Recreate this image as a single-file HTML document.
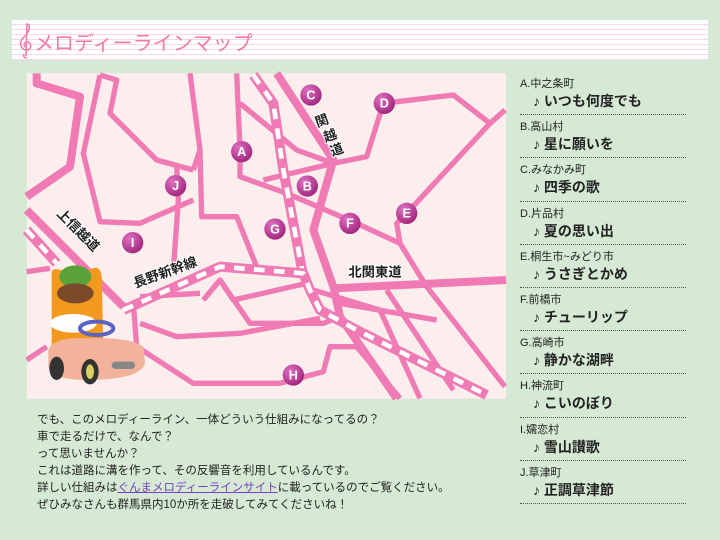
<!DOCTYPE html>
<html><head><meta charset="utf-8">
<style>
body{margin:0;width:720px;height:540px;background:#d5e9d4;font-family:"Liberation Sans","Noto Sans CJK JP",sans-serif;position:relative;overflow:hidden;color:#222}
.head{position:absolute;left:12px;top:20px;width:696px;height:40px;background:#fff;
background-image:repeating-linear-gradient(to bottom,#fff 0,#fff 4px,#fbd7e6 4px,#fbd7e6 5px);}
.head span{position:absolute;left:22px;top:7px;font-size:20px;color:#f07aa8;letter-spacing:0px}
.map{position:absolute;left:20px;top:70px}
.list{position:absolute;left:520px;top:72px;width:166px}
.item{height:43.2px;position:relative;border-bottom:1px dotted #555;box-sizing:border-box}
.item .t{position:absolute;left:0;top:3px;font-size:11px}
.item .s{position:absolute;left:13px;top:19px;font-size:14px;font-weight:bold}
.text{position:absolute;left:37px;top:412px;font-size:11.5px;line-height:17px}
.text a{color:#7a40c0;text-decoration:underline}
</style></head><body>
<div class="head">
<svg style="position:absolute;left:6px;top:0" width="18" height="40" viewBox="0 0 18 40"><path d="M9 38c-3 0-4-2-3-4M8 36 L9 4 C13 4 12 12 5 18 C1 22 2 30 9 30 C14 30 14 22 9 22 C6 22 5 26 8 27" fill="none" stroke="#f07aa8" stroke-width="1.5"/></svg>
<span>メロディーラインマップ</span></div>

<svg class="map" width="490" height="330" viewBox="0 0 1470 990">
<rect x="21" y="10" width="1437" height="976" fill="#fdeeee"/>
<g fill="none" stroke="#f07ab4" stroke-width="16" stroke-linejoin="round">
<path d="M50 10 L50 40 L180 80 L150 290 L20 380" stroke-width="24"/>
<path d="M240 15 L290 30 L270 130 L410 270 L520 300"/>
<path d="M240 15 L190 250 L240 455 L360 460 L520 390"/>
<path d="M510 10 L540 240 L520 300"/>
<path d="M540 240 L545 440 L650 440 L710 590"/>
<path d="M470 290 L475 390 L460 600"/>
<path d="M650 10 L660 240 L660 320 L800 370 L1010 460 L1140 520 L1220 650 L1455 950"/>
<path d="M660 100 L830 240 L940 280"/>
<path d="M730 330 L940 280 L1040 260 L1090 100 L1300 75 L1410 160 L1455 120"/>
<path d="M1140 520 L1130 460 L1160 430 L1410 160"/>
<path d="M770 10 L940 270 L880 480 L940 650 L960 740 L1130 985" stroke-width="24"/>
<path d="M940 655 L1458 630" stroke-width="24"/>
<path d="M1100 660 L1300 960"/>
<path d="M960 700 L1250 750"/>
<path d="M880 660 L1080 720 L1200 985"/>
<path d="M20 420 L310 710" stroke-width="24"/>
<path d="M340 700 L350 830 L520 940 L780 940 L910 905 L930 830 L1010 830 L1140 985"/>
<path d="M360 760 L470 800 L660 790 L900 745"/>
<path d="M550 690 L600 630 L690 760 L910 760 L960 740"/>
<path d="M600 630 L640 690 L860 640"/>
<path d="M20 605 L90 595"/>
<path d="M20 870 L80 830"/>
<path d="M360 680 L540 670"/>
</g>
<g fill="none" stroke-linejoin="round">
<path d="M700 15 L760 100 L790 300 L850 620" stroke="#f07ab4" stroke-width="30"/>
<path d="M700 15 L760 100 L790 300 L850 620" stroke="#fff" stroke-width="14" stroke-dasharray="32 28"/>
<path d="M20 480 L110 580 M310 720 L600 590 L850 610 L870 660 L900 720 L1010 780 L1400 975" stroke="#f07ab4" stroke-width="30"/>
<path d="M20 480 L110 580 M310 720 L600 590 L850 610 L870 660 L900 720 L1010 780 L1400 975" stroke="#fff" stroke-width="14" stroke-dasharray="32 28"/>
</g>
<defs><radialGradient id="g" cx="0.35" cy="0.3" r="0.8"><stop offset="0" stop-color="#e070c0"/><stop offset="1" stop-color="#9a1f78"/></radialGradient></defs>
<g font-family="Liberation Sans,sans-serif" font-weight="bold" font-size="38" fill="#fff" text-anchor="middle">
<g><circle cx="665" cy="245" r="32" fill="url(#g)"/><text x="665" y="258">A</text></g>
<g><circle cx="862" cy="348" r="32" fill="url(#g)"/><text x="862" y="361">B</text></g>
<g><circle cx="873" cy="75" r="32" fill="url(#g)"/><text x="873" y="88">C</text></g>
<g><circle cx="1093" cy="100" r="32" fill="url(#g)"/><text x="1093" y="113">D</text></g>
<g><circle cx="1160" cy="430" r="32" fill="url(#g)"/><text x="1160" y="443">E</text></g>
<g><circle cx="990" cy="460" r="32" fill="url(#g)"/><text x="990" y="473">F</text></g>
<g><circle cx="765" cy="477" r="32" fill="url(#g)"/><text x="765" y="490">G</text></g>
<g><circle cx="820" cy="915" r="32" fill="url(#g)"/><text x="820" y="928">H</text></g>
<g><circle cx="338" cy="518" r="32" fill="url(#g)"/><text x="338" y="531">I</text></g>
<g><circle cx="467" cy="347" r="32" fill="url(#g)"/><text x="467" y="360">J</text></g>
</g>
<g font-family="Liberation Sans,Noto Sans CJK JP,sans-serif" font-weight="bold" font-size="40" fill="#222" stroke="#fff" stroke-width="6" paint-order="stroke">
<text x="1065" y="620" text-anchor="middle">北関東道</text>
<text transform="translate(440,620) rotate(-20)" text-anchor="middle">長野新幹線</text>
<text transform="translate(165,490) rotate(45)" text-anchor="middle">上信越道</text>
<text transform="translate(910,165) rotate(-20)" text-anchor="middle">関</text>
<text transform="translate(935,210) rotate(-20)" text-anchor="middle">越</text>
<text transform="translate(955,252) rotate(-20)" text-anchor="middle">道</text>
</g>
<!-- character -->
<g>
<path d="M95 620 Q90 590 120 600 L210 600 Q240 580 245 620 L250 830 L95 830 Z" fill="#f39a1e"/>
<ellipse cx="166" cy="620" rx="48" ry="34" fill="#5aa23a"/>
<ellipse cx="166" cy="670" rx="55" ry="30" fill="#7a4a2a"/>
<ellipse cx="160" cy="760" rx="70" ry="28" fill="#fff"/>
<ellipse cx="230" cy="775" rx="50" ry="20" fill="none" stroke="#5a64c0" stroke-width="12"/>
<path d="M85 840 Q100 800 200 805 Q330 800 370 830 L375 880 Q360 930 200 930 Q95 930 85 890 Z" fill="#f2b39a"/>
<ellipse cx="110" cy="895" rx="22" ry="35" fill="#333"/>
<ellipse cx="210" cy="905" rx="26" ry="38" fill="#333"/>
<ellipse cx="210" cy="905" rx="12" ry="22" fill="#d8d060"/>
<rect x="275" y="875" width="70" height="22" rx="11" fill="#888"/>
</g>
</svg>

<div class="list">
<div class="item"><div class="t">A.中之条町</div><div class="s">♪ いつも何度でも</div></div>
<div class="item"><div class="t">B.高山村</div><div class="s">♪ 星に願いを</div></div>
<div class="item"><div class="t">C.みなかみ町</div><div class="s">♪ 四季の歌</div></div>
<div class="item"><div class="t">D.片品村</div><div class="s">♪ 夏の思い出</div></div>
<div class="item"><div class="t">E.桐生市~みどり市</div><div class="s">♪ うさぎとかめ</div></div>
<div class="item"><div class="t">F.前橋市</div><div class="s">♪ チューリップ</div></div>
<div class="item"><div class="t">G.高崎市</div><div class="s">♪ 静かな湖畔</div></div>
<div class="item"><div class="t">H.神流町</div><div class="s">♪ こいのぼり</div></div>
<div class="item"><div class="t">I.嬬恋村</div><div class="s">♪ 雪山讃歌</div></div>
<div class="item"><div class="t">J.草津町</div><div class="s">♪ 正調草津節</div></div>
</div>

<div class="text">でも、このメロディーライン、一体どういう仕組みになってるの？<br>車で走るだけで、なんで？<br>って思いませんか？<br>これは道路に溝を作って、その反響音を利用しているんです。<br>詳しい仕組みは<a>ぐんまメロディーラインサイト</a>に載っているのでご覧ください。<br>ぜひみなさんも群馬県内10か所を走破してみてくださいね！</div>
</body></html>
